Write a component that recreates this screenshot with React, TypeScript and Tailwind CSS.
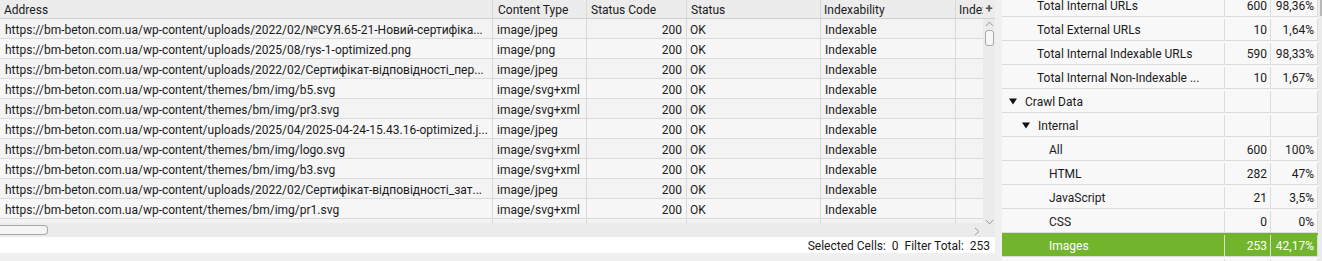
import React from 'react';

const rows = [
    { url: 'https://bm-beton.com.ua/wp-content/uploads/2022/02/№СУЯ.65-21-Новий-сертифіка...', type: 'image/jpeg' },
    { url: 'https://bm-beton.com.ua/wp-content/uploads/2025/08/rys-1-optimized.png', type: 'image/png' },
    { url: 'https://bm-beton.com.ua/wp-content/uploads/2022/02/Сертифікат-відповідності_пер...', type: 'image/jpeg' },
    { url: 'https://bm-beton.com.ua/wp-content/themes/bm/img/b5.svg', type: 'image/svg+xml' },
    { url: 'https://bm-beton.com.ua/wp-content/themes/bm/img/pr3.svg', type: 'image/svg+xml' },
    { url: 'https://bm-beton.com.ua/wp-content/uploads/2025/04/2025-04-24-15.43.16-optimized.j...', type: 'image/jpeg' },
    { url: 'https://bm-beton.com.ua/wp-content/themes/bm/img/logo.svg', type: 'image/svg+xml' },
    { url: 'https://bm-beton.com.ua/wp-content/themes/bm/img/b3.svg', type: 'image/svg+xml' },
    { url: 'https://bm-beton.com.ua/wp-content/uploads/2022/02/Сертифікат-відповідності_зат...', type: 'image/jpeg' },
    { url: 'https://bm-beton.com.ua/wp-content/themes/bm/img/pr1.svg', type: 'image/svg+xml' },
];

const summary = [
    { label: 'Total Internal URLs', count: '600', pct: '98,36%', indent: 'pl-[35px]' },
    { label: 'Total External URLs', count: '10', pct: '1,64%', indent: 'pl-[35px]' },
    { label: 'Total Internal Indexable URLs', count: '590', pct: '98,33%', indent: 'pl-[35px]' },
    { label: 'Total Internal Non-Indexable ...', count: '10', pct: '1,67%', indent: 'pl-[35px]' },
    { label: 'Crawl Data', count: '', pct: '', indent: 'pl-[7px]', arrow: true },
    { label: 'Internal', count: '', pct: '', indent: 'pl-[20px]', arrow: true },
    { label: 'All', count: '600', pct: '100%', indent: 'pl-[47px]' },
    { label: 'HTML', count: '282', pct: '47%', indent: 'pl-[47px]' },
    { label: 'JavaScript', count: '21', pct: '3,5%', indent: 'pl-[47px]' },
    { label: 'CSS', count: '0', pct: '0%', indent: 'pl-[47px]' },
    { label: 'Images', count: '253', pct: '42,17%', indent: 'pl-[47px]', active: true },
    { label: '', count: '', pct: '', indent: 'pl-[47px]' },
];

const cols = 'grid grid-cols-[493px_94px_100px_134px_135px_27px]';
const cell = 'h-full border-r border-[#d9d9d9] flex items-center overflow-hidden whitespace-nowrap pt-[2px]';

const Triangle = () => (
    <svg width="8" height="7" viewBox="0 0 8 7" className="mr-[8px] shrink-0">
        <path d="M0 0.5 L8 0.5 L4 6.5 Z" fill="#111" />
    </svg>
);

export default function App() {
    return (
        <div className="w-[1322px] h-[261px] flex bg-[#f0f0f0] overflow-hidden text-[12px] text-[#1a1a1a]" style={{ fontFamily: 'Roboto, "Noto Sans", sans-serif' }}>
            {/* left table pane */}
            <div className="w-[995px] flex flex-col">
                <div className="h-[237px] flex">
                    <div className="w-[983px] flex flex-col">
                        <div className={`${cols} h-[19px] bg-[#ececec] border-b border-[#d0d0d0]`}>
                            <div className={`${cell} pl-[4px]`}>Address</div>
                            <div className={`${cell} pl-[5px]`}>Content Type</div>
                            <div className={`${cell} pl-[4px]`}>Status Code</div>
                            <div className={`${cell} pl-[4px]`}>Status</div>
                            <div className={`${cell} pl-[3px]`}>Indexability</div>
                            <div className={`${cell} pl-[3px] border-r-0`}>Indexability Status</div>
                        </div>
                        <div className="flex-1 overflow-hidden">
                            {[...rows, { url: '', type: '' }].map((r, i) => (
                                <div key={i} className={`${cols} h-[20px] border-b border-[#d9d9d9] ${i % 2 === 0 ? 'bg-[#f3f3f3]' : 'bg-[#f7f7f7]'}`}>
                                    <div className={`${cell} pl-[5px]`}>{r.url}</div>
                                    <div className={`${cell} pl-[4px]`}>{r.type}</div>
                                    <div className={`${cell} justify-end pr-[4px]`}>{r.url ? '200' : ''}</div>
                                    <div className={`${cell} pl-[3px]`}>{r.url ? 'OK' : ''}</div>
                                    <div className={`${cell} pl-[4px]`}>{r.url ? 'Indexable' : ''}</div>
                                    <div className={`${cell} border-r-0`}></div>
                                </div>
                            ))}
                        </div>
                        <div className="h-[14px] bg-[#ebebeb] flex items-center justify-between">
                            <div className="w-[48px] h-[10px] bg-[#f4f4f4] border border-[#a9a9a9] rounded-r-[4px] border-l-0"></div>
                            <svg width="6" height="9" viewBox="0 0 6 9" className="mr-[3px] mt-[2px]">
                                <path d="M1 1 L5 4.5 L1 8" fill="none" stroke="#9a9a9a" strokeWidth="1" />
                            </svg>
                        </div>
                    </div>
                    <div className="w-[12px] flex flex-col bg-[#ebebeb]">
                        <div className="h-[19px] flex items-center justify-center bg-[#ececec] border-b border-[#d0d0d0] text-[13px] font-bold text-[#555]">+</div>
                        <div className="flex-1 flex flex-col items-center">
                            <svg width="9" height="6" viewBox="0 0 9 6" className="mt-[2px]">
                                <path d="M1 5 L4.5 1 L8 5" fill="none" stroke="#9a9a9a" strokeWidth="1" />
                            </svg>
                            <div className="w-[9px] h-[16px] mt-[3px] bg-[#f6f6f6] border border-[#a9a9a9] rounded-[3px]"></div>
                            <div className="flex-1"></div>
                            <svg width="9" height="6" viewBox="0 0 9 6" className="mb-[12px]">
                                <path d="M1 1 L4.5 5 L8 1" fill="none" stroke="#9a9a9a" strokeWidth="1" />
                            </svg>
                        </div>
                    </div>
                </div>
                <div className="h-[16px] bg-white flex items-center justify-end pr-[5px] pt-[1px] text-[12px] whitespace-pre">
                    Selected Cells:  0  Filter Total:  253
                </div>
                <div className="flex-1 bg-[#f0f0f0]"></div>
            </div>

            {/* splitter */}
            <div className="w-[7px] bg-[#f0f0f0]"></div>

            {/* right summary pane */}
            <div className="flex-1 flex bg-[#f8f8f8]">
                <div className="w-[316px] flex flex-col -mt-[7px]">
                    {summary.map((s, i) => (
                        <div key={i} className={`h-[24px] shrink-0 flex border-b border-[#dcdcdc] pt-[2px] ${s.active ? 'bg-[#72b52d] text-white' : ''}`}>
                            <div className={`w-[223px] border-r border-[#dcdcdc] flex items-center whitespace-nowrap ${s.indent}`}>
                                {s.arrow && <Triangle />}
                                {s.label}
                            </div>
                            <div className="w-[46px] border-r border-[#dcdcdc] flex items-center justify-end pr-[3px]">{s.count}</div>
                            <div className="w-[47px] border-r border-[#dcdcdc] flex items-center justify-end pr-[3px]">{s.pct}</div>
                        </div>
                    ))}
                </div>
                <div className="flex-1 bg-[#ececec] flex justify-end">
                    <div className="w-[2px] h-[16px] bg-[#b8b8b8]"></div>
                </div>
            </div>
        </div>
    );
}
